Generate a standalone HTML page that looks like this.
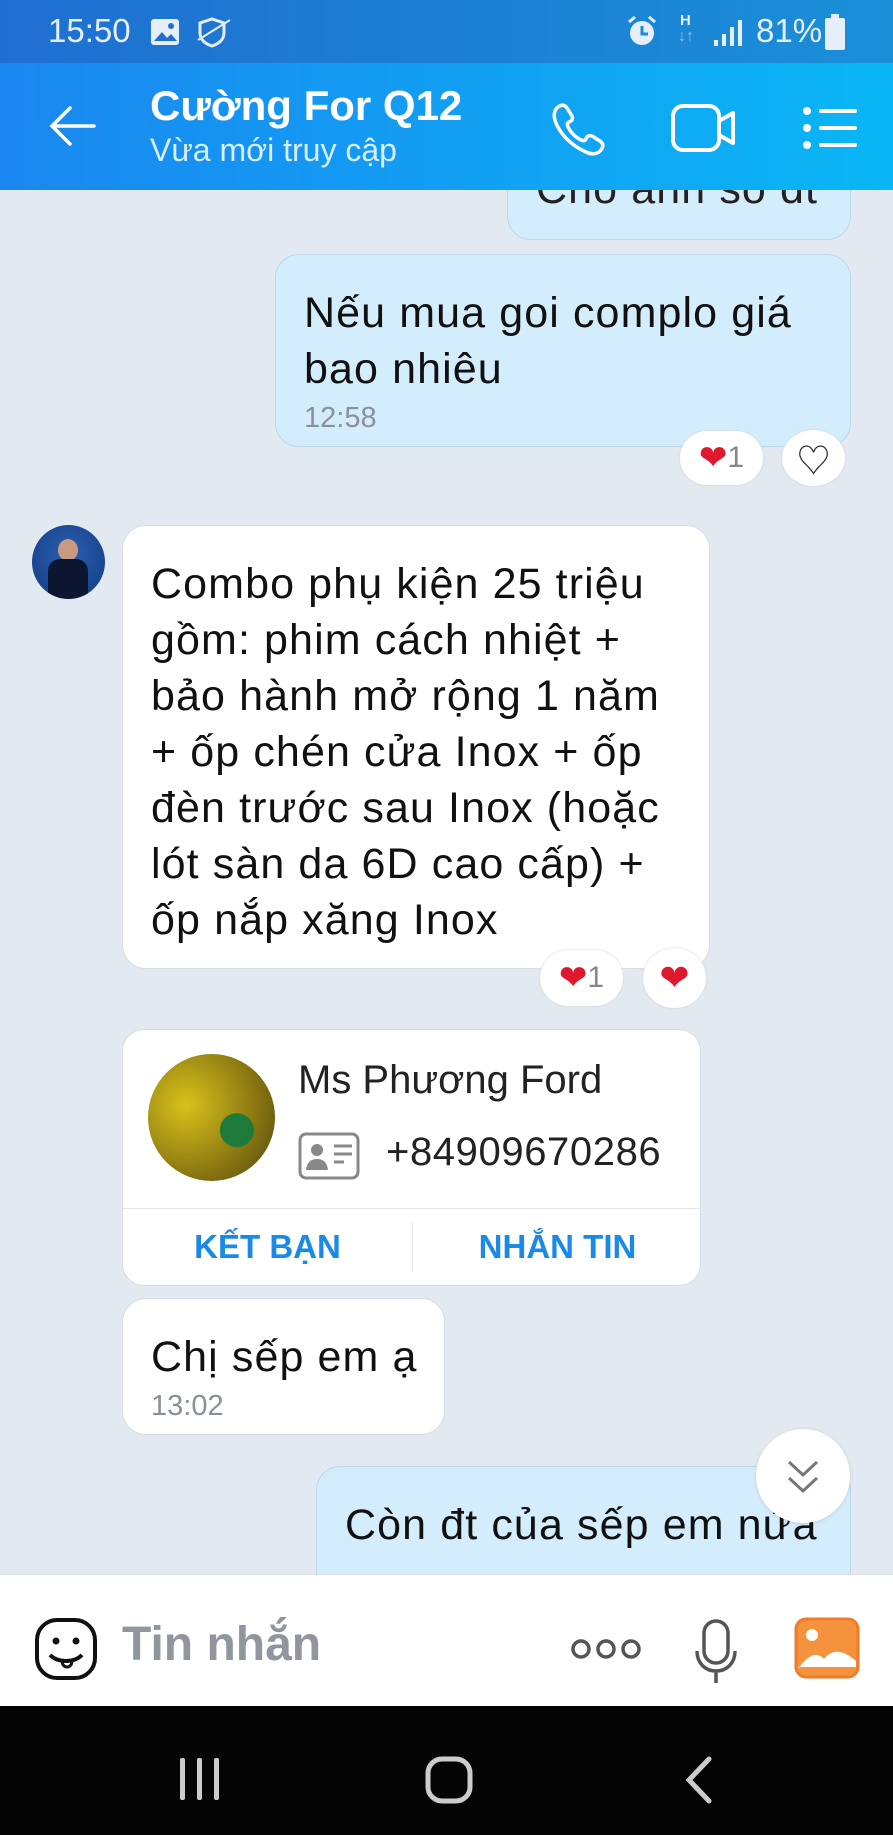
<!DOCTYPE html>
<html><head><meta charset="utf-8"><style>
*{margin:0;padding:0;box-sizing:border-box}
body{width:893px;height:1835px;overflow:hidden;background:#e2e9f1;font-family:"Liberation Sans","Noto Sans CJK SC",sans-serif;position:relative;color:#111}
.abs{position:absolute}
.status{left:0;top:0;width:893px;height:63px;background:linear-gradient(90deg,#1f6fd0,#1a8fd8);color:#e6eefa;font-size:34px}
.bub{position:absolute;border-radius:24px;font-size:43px;letter-spacing:1.1px;line-height:56px;padding-left:28px}
.me{background:#d4edfd;border:1px solid #bcd7ec}
.them{background:#fff;border:1px solid #d6dde6}
.time{font-size:29px;letter-spacing:0;color:#8a9099;line-height:30px}
.pill{position:absolute;background:#fff;border-radius:28px;display:flex;align-items:center;justify-content:center;font-size:30px;color:#888;box-shadow:0 0 2px #c8d0d8}
</style></head><body>
<div class="abs status">
  <div class="abs" style="left:48px;top:12px;font-size:33px">15:50</div>
  <svg class="abs" style="left:150px;top:18px" width="30" height="28"><rect x="1" y="1" width="28" height="26" rx="3" fill="#e6eefa"/><path d="M4 23l8-9 5 6 4-4 6 7z" fill="#1f6fd0"/><circle cx="21" cy="8" r="3" fill="#1f6fd0"/></svg>
  <svg class="abs" style="left:196px;top:16px" width="36" height="32"><path d="M16 3l12 4v10c0 7-6 11-12 13C10 28 4 24 4 17V7z" fill="none" stroke="#e6eefa" stroke-width="3"/><path d="M2 24L34 4" stroke="#e6eefa" stroke-width="2"/></svg>
  <svg class="abs" style="left:625px;top:14px" width="34" height="34"><circle cx="17" cy="19" r="12" fill="#e6eefa"/><path d="M17 12v8h6" stroke="#1a8fd8" stroke-width="3" fill="none"/><path d="M4 8l6-5M30 8l-6-5" stroke="#e6eefa" stroke-width="3"/></svg>
  <div class="abs" style="left:680px;top:12px;font-size:15px;font-weight:bold">H</div>
  <div class="abs" style="left:678px;top:28px;font-size:16px;color:#9fbce0">↓↑</div>
  <svg class="abs" style="left:712px;top:18px" width="30" height="30"><rect x="2" y="22" width="4" height="6" fill="#e6eefa"/><rect x="10" y="16" width="4" height="12" fill="#e6eefa"/><rect x="18" y="9" width="4" height="19" fill="#e6eefa"/><rect x="26" y="2" width="4" height="26" fill="#e6eefa"/></svg>
  <div class="abs" style="left:756px;top:12px;font-size:33px">81%</div>
  <svg class="abs" style="left:824px;top:14px" width="22" height="36"><rect x="7" y="0" width="8" height="4" fill="#e6eefa"/><rect x="1" y="4" width="20" height="32" rx="2" fill="#e6eefa"/></svg>
</div>

<div class="bub me" style="left:507px;top:150px;width:344px;height:90px"><div style="position:absolute;top:10px;left:28px;color:#222">Cho anh số đt</div></div>
<div class="abs" style="left:0;top:63px;width:893px;height:127px;background:linear-gradient(90deg,#1a87f0,#0ab6f5)"></div>
<div class="abs" style="left:150px;top:82px;font-size:42px;font-weight:bold;color:#fff">Cường For Q12</div>
<div class="abs" style="left:150px;top:132px;font-size:32px;color:#d8eeff">Vừa mới truy cập</div>
<svg class="abs" style="left:48px;top:106px" width="50" height="40"><path d="M46 20H4M22 2L4 20l18 18" stroke="#fff" stroke-width="3.5" fill="none" stroke-linecap="round"/></svg>
<svg class="abs" style="left:550px;top:101px" width="56" height="56"><path d="M8 6c4-3 7-2 9 1l5 8c1 3 0 5-3 6-2 1-2 3-1 5 3 6 7 10 13 13 2 1 4 1 5-1 1-3 3-4 6-3l8 5c3 2 4 5 1 9-3 4-9 5-15 2C22 45 11 34 6 22 3 15 4 9 8 6z" fill="none" stroke="#fff" stroke-width="3.5"/></svg>
<svg class="abs" style="left:670px;top:103px" width="68" height="50"><rect x="3" y="3" width="46" height="44" rx="10" fill="none" stroke="#fff" stroke-width="4"/><path d="M49 18l14-8v30l-14-8" fill="none" stroke="#fff" stroke-width="4" stroke-linejoin="round"/></svg>
<svg class="abs" style="left:802px;top:106px" width="56" height="44"><g fill="#fff"><circle cx="5" cy="5" r="4"/><circle cx="5" cy="22" r="4"/><circle cx="5" cy="39" r="4"/><rect x="17" y="3" width="38" height="4" rx="2"/><rect x="17" y="20" width="38" height="4" rx="2"/><rect x="17" y="37" width="38" height="4" rx="2"/></g></svg>

<div class="bub me" style="left:275px;top:254px;width:576px;height:193px;padding-top:30px">Nếu mua goi complo giá<br>bao nhiêu<div class="time" style="margin-top:6px">12:58</div></div>
<div class="pill" style="left:680px;top:431px;width:83px;height:54px"><span style="color:#e0182d;font-size:34px">❤</span>1</div>
<div class="pill" style="left:782px;top:430px;width:63px;height:56px;border-radius:50%;font-size:34px;color:#333">♡</div>

<div class="abs" style="left:32px;top:525px;width:73px;height:74px;border-radius:50%;background:radial-gradient(circle at 50% 40%,#2a5fb0,#123a80);overflow:hidden"><div class="abs" style="left:26px;top:14px;width:20px;height:22px;border-radius:50%;background:#c89a80"></div><div class="abs" style="left:16px;top:34px;width:40px;height:42px;border-radius:12px 12px 0 0;background:#0d1630"></div></div>
<div class="bub them" style="left:122px;top:525px;width:588px;height:444px;padding-top:30px">Combo phụ kiện 25 triệu<br>gồm: phim cách nhiệt +<br>bảo hành mở rộng 1 năm<br>+ ốp chén cửa Inox + ốp<br>đèn trước sau Inox (hoặc<br>lót sàn da 6D cao cấp) +<br>ốp nắp xăng Inox</div>
<div class="pill" style="left:540px;top:950px;width:83px;height:56px"><span style="color:#e0182d;font-size:34px">❤</span>1</div>
<div class="pill" style="left:643px;top:948px;width:63px;height:60px;border-radius:50%;color:#e0182d;font-size:36px">❤</div>

<div class="abs" style="left:122px;top:1029px;width:579px;height:257px;background:#fff;border-radius:22px;border:1px solid #d6dde6">
  <div class="abs" style="left:25px;top:24px;width:127px;height:127px;border-radius:50%;background:radial-gradient(circle at 70% 60%,#1d7a3a 0 14%,transparent 15%),radial-gradient(circle at 30% 40%,#d8c21a,#7c6a10 70%,#3e4a18);"></div>
  <div class="abs" style="left:175px;top:28px;font-size:40px;color:#222">Ms Phương Ford</div>
  <svg class="abs" style="left:175px;top:102px" width="62" height="48"><rect x="2" y="2" width="58" height="44" rx="6" fill="none" stroke="#888" stroke-width="3"/><circle cx="19" cy="18" r="6" fill="#888"/><path d="M8 38c1-8 5-11 11-11s10 3 11 11z" fill="#888"/><path d="M36 14h18M36 22h18M36 30h10" stroke="#888" stroke-width="3"/></svg>
  <div class="abs" style="left:263px;top:100px;font-size:40px;letter-spacing:0.6px;color:#222">+84909670286</div>
  <div class="abs" style="left:0;top:178px;width:579px;height:1px;background:#e2e6ea"></div>
  <div class="abs" style="left:289px;top:192px;width:1px;height:50px;background:#e2e6ea"></div>
  <div class="abs" style="left:0;top:198px;width:289px;text-align:center;font-size:33px;font-weight:bold;color:#1a8ae6">KẾT BẠN</div>
  <div class="abs" style="left:290px;top:198px;width:289px;text-align:center;font-size:33px;font-weight:bold;color:#1a8ae6">NHẮN TIN</div>
</div>

<div class="bub them" style="left:122px;top:1298px;width:323px;height:137px;padding-top:30px">Chị sếp em ạ<div class="time" style="margin-top:6px">13:02</div></div>
<div class="bub me" style="left:316px;top:1466px;width:535px;height:130px;padding-top:30px">Còn đt của sếp em nửa</div>
<div class="abs" style="left:756px;top:1429px;width:94px;height:94px;border-radius:50%;background:#fff;box-shadow:0 1px 4px rgba(0,0,0,.12)"><svg class="abs" style="left:30px;top:30px" width="34" height="36"><path d="M3 3l14 13 14-13M3 19l14 13 14-13" stroke="#777" stroke-width="3" fill="none"/></svg></div>

<div class="abs" style="left:0;top:1574px;width:893px;height:132px;background:#fff;border-top:1px solid #dde2e8">
  <svg class="abs" style="left:34px;top:42px" width="64" height="64"><rect x="3" y="3" width="58" height="58" rx="20" fill="none" stroke="#111" stroke-width="4"/><circle cx="22" cy="24" r="3.5" fill="#111"/><circle cx="42" cy="24" r="3.5" fill="#111"/><path d="M16 38c8 8 24 8 32 0" stroke="#111" stroke-width="4" fill="none"/><path d="M28 44c0 8 10 8 10 0" stroke="#111" stroke-width="3" fill="none"/></svg>
  <div class="abs" style="left:122px;top:42px;font-size:48px;font-weight:bold;color:#8f969e">Tin nhắn</div>
  <svg class="abs" style="left:570px;top:62px" width="72" height="24"><g fill="none" stroke="#555" stroke-width="3.5"><circle cx="11" cy="12" r="8"/><circle cx="36" cy="12" r="8"/><circle cx="61" cy="12" r="8"/></g></svg>
  <svg class="abs" style="left:694px;top:44px" width="44" height="66"><rect x="10" y="2" width="24" height="42" rx="12" fill="none" stroke="#555" stroke-width="3.5"/><path d="M3 32c0 12 8 20 19 20s19-8 19-20M22 52v12" stroke="#555" stroke-width="3.5" fill="none"/></svg>
  <svg class="abs" style="left:794px;top:42px" width="66" height="62"><rect x="2" y="2" width="62" height="58" rx="10" fill="#f5923e" stroke="#f07a2a" stroke-width="3"/><circle cx="18" cy="18" r="6" fill="#fff"/><path d="M4 52c10-14 18-18 26-10 8-10 18-10 32 2v6H4z" fill="#fff"/></svg>
</div>
<div class="abs" style="left:0;top:1706px;width:893px;height:129px;background:#050505">
  <svg class="abs" style="left:178px;top:50px" width="44" height="46"><g fill="#ccc"><rect x="2" y="2" width="5" height="42" rx="2"/><rect x="19" y="2" width="5" height="42" rx="2"/><rect x="36" y="2" width="5" height="42" rx="2"/></g></svg>
  <svg class="abs" style="left:425px;top:50px" width="48" height="48"><rect x="3" y="3" width="42" height="42" rx="14" fill="none" stroke="#ccc" stroke-width="5"/></svg>
  <svg class="abs" style="left:684px;top:50px" width="30" height="48"><path d="M25 3L5 24l20 21" stroke="#ccc" stroke-width="5" fill="none" stroke-linecap="round"/></svg>
</div>
</body></html>
